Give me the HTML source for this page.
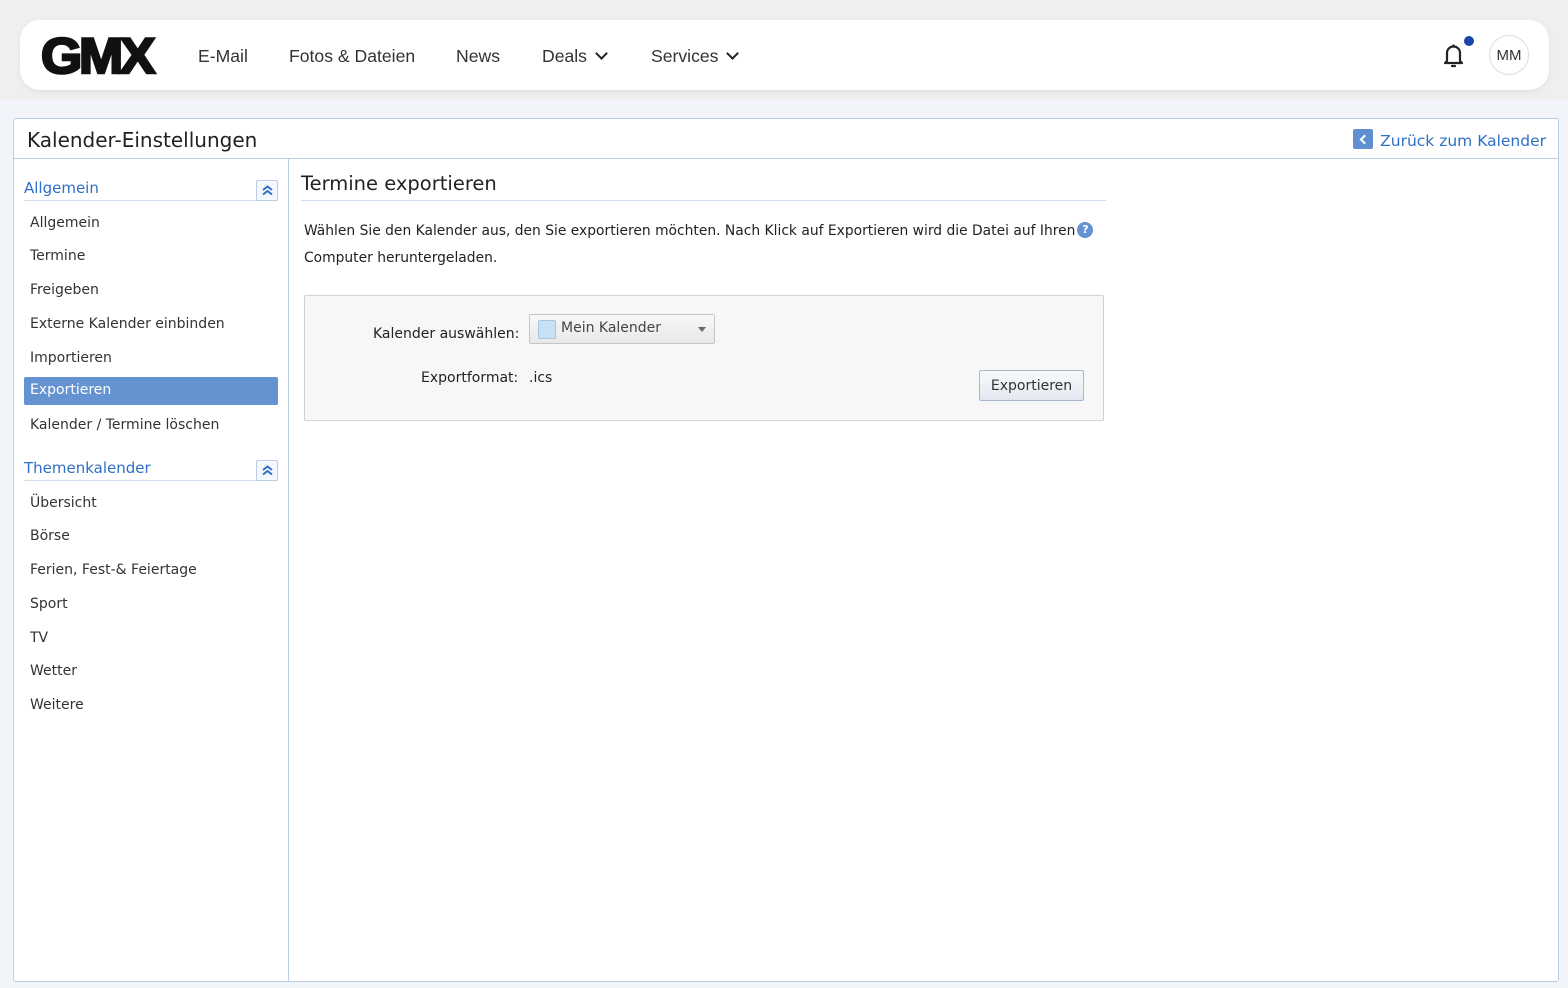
<!DOCTYPE html>
<html><head><meta charset="utf-8"><style>
*{box-sizing:border-box;margin:0;padding:0}
body{width:1568px;height:988px;overflow:hidden;background:#f1f4f9;font-family:"DejaVu Sans",Verdana,sans-serif;font-size:13px;color:#333;position:relative}
.topbg{position:absolute;left:0;top:0;width:1568px;height:100px;background:#efefef}
.hdr{position:absolute;left:20px;top:20px;width:1529px;height:70px;background:#fff;border-radius:20px;box-shadow:0 2px 6px rgba(0,0,0,.06)}
.logo{position:absolute;left:21px;top:12px;font-family:"Liberation Sans",Arial,sans-serif;font-weight:900;font-size:50px;letter-spacing:-3px;color:#111;line-height:48px;-webkit-text-stroke:2.5px #111;transform:scaleX(1.06);transform-origin:left}
.nav{position:absolute;top:26px;font-family:"Liberation Sans",Arial,sans-serif;font-size:17.6px;color:#333}
.chev{display:inline-block;width:9px;height:9px;border-right:2.5px solid #222;border-bottom:2.5px solid #222;transform:rotate(45deg);margin-left:10px;position:relative;top:-4px}
.avatar{position:absolute;left:1469px;top:15px;width:40px;height:40px;border:1px solid #ddd;border-radius:50%;font-family:"Liberation Sans",Arial,sans-serif;font-size:15px;text-align:center;line-height:40px;color:#333}
.panel{position:absolute;left:13px;top:118px;width:1546px;height:864px;background:#fff;border:1px solid #b9cde8;border-radius:3px}
.ptitle{position:absolute;left:13px;top:9px;font-size:20px;color:#222}
.back{position:absolute;right:12px;top:10px;font-size:15.5px;color:#2f6fc7}
.back i{display:inline-block;width:20px;height:20px;background:#5f8fd0;border-radius:2px;vertical-align:-3px;margin-right:7px;position:relative}
.back i:after{content:"";position:absolute;left:8px;top:7px;width:5px;height:5px;border-left:2px solid #fff;border-bottom:2px solid #fff;transform:rotate(45deg)}
.hline{position:absolute;left:0;top:39px;width:100%;border-top:1px solid #b9cde8}
.vline{position:absolute;left:274px;top:39px;bottom:0;border-left:1px solid #b9cde8}
.sh{position:absolute;left:10px;width:254px;height:22px;border-bottom:1px solid #cfdcee;color:#2f6fc7;font-size:15px}
.sh b{position:absolute;right:0;top:1px;width:22px;height:21px;border:1px solid #b9cde8;border-radius:2px;background:#f4f8fd}
.sh b svg{position:absolute;left:5px;top:4px}
.it{position:absolute;left:16px;font-size:14px;color:#333}
.sel{position:absolute;left:10px;top:258px;width:254px;height:28px;background:#6592d0;border-radius:2px;color:#fff;padding:5px 6px;font-size:14px}
.h2{position:absolute;left:287px;top:53px;width:805px;height:29px;border-bottom:1px solid #cfdcee;font-size:19.5px;color:#222}
.txt{position:absolute;left:290px;top:99px;width:820px;font-size:13.85px;line-height:27px;color:#222}
.q{display:inline-block;width:16px;height:16px;border-radius:50%;background:#6592d0;color:#fff;font-size:11px;text-align:center;line-height:16px;font-weight:bold;vertical-align:2px;margin-left:2px}
.box{position:absolute;left:290px;top:176px;width:800px;height:126px;background:#f7f7f7;border:1px solid #d3d3d3;border-radius:2px}
.lbl{position:absolute;font-size:14px;color:#222}
.dd{position:absolute;left:224px;top:18px;width:186px;height:30px;border:1px solid #c6c6c6;border-radius:2px;background:linear-gradient(#f8f8f8,#e8e8e8);font-size:14px;color:#444}
.dd .sw{position:absolute;left:8px;top:5px;width:18px;height:19px;background:#c7e2f4;border:1px solid #a7c5dc;border-radius:2px}
.dd .t{position:absolute;left:31px;top:5px}
.dd .a{position:absolute;right:8px;top:12px;border:4px solid transparent;border-top:5px solid #666}
.btn{position:absolute;left:674px;top:74px;width:105px;height:31px;border:1px solid #a9b8cc;border-radius:2px;background:linear-gradient(#f7f9fc,#e4e9f1);font-size:14px;text-align:center;line-height:31px;color:#333}
</style></head><body>
<div class="topbg"></div>
<div class="hdr">
<div class="logo">GMX</div>
<div class="nav" style="left:178px">E-Mail</div>
<div class="nav" style="left:269px">Fotos &amp; Dateien</div>
<div class="nav" style="left:436px">News</div>
<div class="nav" style="left:522px">Deals<span class="chev"></span></div>
<div class="nav" style="left:631px">Services<span class="chev"></span></div>
<svg style="position:absolute;left:1422px;top:21px" width="26" height="28" viewBox="0 0 26 28"><path d="M5 20 V12 a6.5 6.5 0 0 1 13 0 V20 L20 22 H3 Z" fill="none" stroke="#222" stroke-width="2.2" stroke-linejoin="round"/><path d="M10 25 h3" stroke="#222" stroke-width="2.2" stroke-linecap="round"/><path d="M11.5 3.5 v2" stroke="#222" stroke-width="2"/></svg>
<div style="position:absolute;left:1444px;top:16px;width:10px;height:10px;border-radius:50%;background:#1a44a8"></div>
<div class="avatar">MM</div>
</div>
<div class="panel">
<div class="ptitle">Kalender-Einstellungen</div>
<div class="back"><i></i>Zurück zum Kalender</div>
<div class="hline"></div><div class="vline"></div>
<div class="sh" style="top:60px">Allgemein<b><svg width="11" height="11" viewBox="0 0 11 11"><path d="M1 5 L5.5 1.5 L10 5 M1 9.5 L5.5 6 L10 9.5" fill="none" stroke="#2f6fc7" stroke-width="2"/></svg></b></div>
<div class="it" style="top:96px">Allgemein</div>
<div class="it" style="top:129px">Termine</div>
<div class="it" style="top:163px">Freigeben</div>
<div class="it" style="top:197px">Externe Kalender einbinden</div>
<div class="it" style="top:231px">Importieren</div>
<div class="sel">Exportieren</div>
<div class="it" style="top:298px">Kalender / Termine löschen</div>
<div class="sh" style="top:340px">Themenkalender<b><svg width="11" height="11" viewBox="0 0 11 11"><path d="M1 5 L5.5 1.5 L10 5 M1 9.5 L5.5 6 L10 9.5" fill="none" stroke="#2f6fc7" stroke-width="2"/></svg></b></div>
<div class="it" style="top:376px">Übersicht</div>
<div class="it" style="top:409px">Börse</div>
<div class="it" style="top:443px">Ferien, Fest-&amp; Feiertage</div>
<div class="it" style="top:477px">Sport</div>
<div class="it" style="top:511px">TV</div>
<div class="it" style="top:544px">Wetter</div>
<div class="it" style="top:578px">Weitere</div>
<div class="h2">Termine exportieren</div>
<div class="txt">Wählen Sie den Kalender aus, den Sie exportieren möchten. Nach Klick auf Exportieren wird die Datei auf Ihren<span class="q">?</span><br>Computer heruntergeladen.</div>
<div class="box">
<div class="lbl" style="left:68px;top:30px">Kalender auswählen:</div>
<div class="dd"><div class="sw"></div><div class="t">Mein Kalender</div><div class="a"></div></div>
<div class="lbl" style="left:116px;top:74px">Exportformat:</div>
<div class="lbl" style="left:224px;top:74px">.ics</div>
<div class="btn">Exportieren</div>
</div>
</div>
</body></html>
